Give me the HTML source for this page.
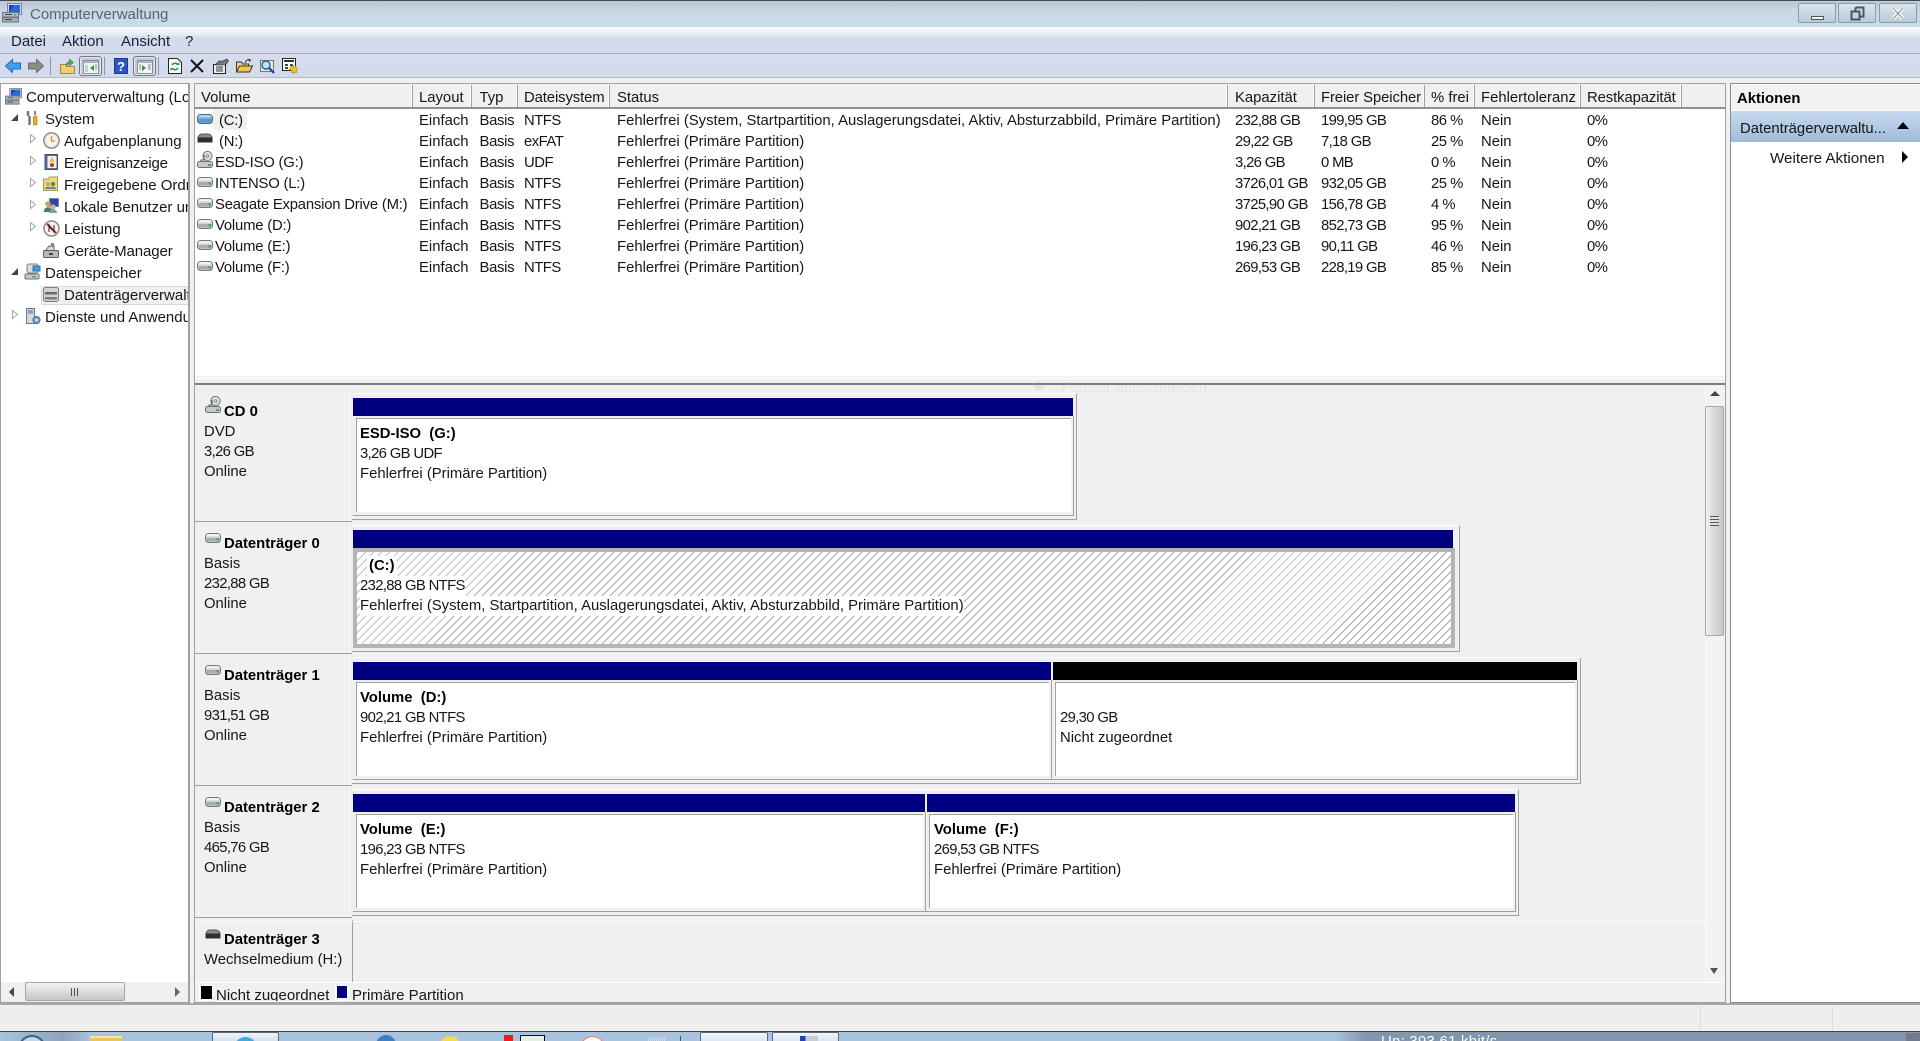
<!DOCTYPE html>
<html lang="de"><head><meta charset="utf-8"><title>Computerverwaltung</title>
<style>
html,body{margin:0;padding:0;width:1920px;height:1041px;overflow:hidden;background:#f0f0f0}
body{position:relative;font:14.85px/20px "Liberation Sans",sans-serif;color:#161616}
.a{position:absolute}
.t{position:absolute;white-space:nowrap;height:20px;line-height:20px;margin-top:1px}
.f{font-size:15px}
.n{letter-spacing:-.65px}
b{font-weight:700;color:#000}
svg{position:absolute;overflow:visible}
.hd{position:absolute;top:85px;height:23px;background:#f0f0f0;border-right:1px solid #a0a0a0;box-shadow:inset -1px 0 0 #fff;box-sizing:border-box}
.r{position:absolute;left:0;width:1700px;height:21px}
.r span{position:absolute;white-space:nowrap;line-height:21px;top:2px}
.r span:nth-child(1){left:215px;letter-spacing:-.2px}.r span:nth-child(2){left:419px}.r span:nth-child(3){left:479.500px;letter-spacing:-.3px}.r span:nth-child(4){left:524px;letter-spacing:-.5px}.r span:nth-child(5){left:617px}.r span:nth-child(6){left:1235px;letter-spacing:-.65px}.r span:nth-child(7){left:1321px;letter-spacing:-.65px}.r span:nth-child(8){left:1431px;letter-spacing:-.5px}.r span:nth-child(9){left:1481px}.r span:nth-child(10){left:1587px;letter-spacing:-.5px}
.frame{position:absolute;left:352px;background:#f0f0f0;border-top:1px solid #fff;border-right:1px solid #a0a0a0;border-bottom:1px solid #a0a0a0;box-sizing:border-box}
.bar{position:absolute;top:530px;height:18px}
.box{position:absolute;background:#f0f0f0;border-right:1px solid #a0a0a0;border-bottom:1px solid #a0a0a0;box-sizing:border-box}
.in{position:absolute;left:3px;top:2px;right:2px;bottom:3px;background:#fff;border-left:1px solid #a0a0a0;border-top:1px solid #a0a0a0}
.sep{position:absolute;left:195px;width:157px;height:1px;background:#a0a0a0}
.tr{position:absolute;width:0;height:0}
.clip{position:absolute;overflow:hidden}
</style></head><body>
<svg width="0" height="0" style="position:absolute">
<defs>
<symbol id="drv" viewBox="0 0 16 10"><rect x=".5" y=".5" width="15" height="9" rx="3" fill="#d4d6d8" stroke="#77797c"/><rect x="1.5" y="1.2" width="13" height="2" rx="1" fill="#f4f4f4"/><rect x="1.5" y="5" width="13" height="3.5" fill="#a9abae"/><rect x="11.5" y="5" width="2.5" height="2.5" fill="#3fae49"/></symbol>
<symbol id="drvb" viewBox="0 0 16 10"><rect x=".5" y=".5" width="15" height="9" rx="3" fill="#7fb0e0" stroke="#3f6f9f"/><rect x="1.5" y="1.2" width="13" height="2" rx="1" fill="#b5d5f2"/><rect x="1.5" y="5" width="13" height="3.5" fill="#5d94cc"/><rect x="11.5" y="5" width="2.5" height="2.5" fill="#3fae49"/></symbol>
<symbol id="drvk" viewBox="0 0 16 10"><path d="M1 9V5a4 4 0 0 1 4-4h6a4 4 0 0 1 4 4v4z" fill="#8a8a8a" stroke="#555"/><rect x=".5" y="4.5" width="15" height="5" rx="1" fill="#2f2f2f"/></symbol>
<symbol id="cd" viewBox="0 0 16 17"><circle cx="10.5" cy="5" r="4.6" fill="#dfe2e5" stroke="#777"/><circle cx="10.5" cy="5" r="1.3" fill="#fff" stroke="#888"/><path d="M7 4v5H4v2" fill="none" stroke="#555"/><rect x=".5" y="10.5" width="15" height="6" rx="2" fill="#c6c8cb" stroke="#6f7174"/><rect x="11" y="13" width="3" height="2" fill="#3fae49"/></symbol>
<symbol id="comp" viewBox="0 0 20 20"><rect x="5.5" y=".5" width="14" height="11" fill="#d5dbe3" stroke="#7c8694"/><rect x="7" y="2" width="11" height="8" fill="#1f3fbf"/><path d="M7 10l5-8h6v8z" fill="#2a6ad8"/><rect x=".5" y="9.5" width="16" height="4.5" fill="#b8bec6" stroke="#6d7480"/><rect x=".5" y="14.5" width="16" height="4.5" fill="#a4abb4" stroke="#6d7480"/><rect x="3" y="11" width="7" height="1" fill="#444"/><rect x="3" y="16" width="7" height="1" fill="#444"/><rect x="12" y="11" width="2" height="1.5" fill="#3fae49"/></symbol>
</defs></svg>

<!-- title bar -->
<div class="a" style="left:0;top:0;width:1920px;height:27px;background:linear-gradient(#b8c8d6,#c9d8e4 40%,#cbdbe7);border-top:1px solid #4a4a4a;box-sizing:border-box"></div>
<svg style="left:2px;top:3px" width="20" height="20"><use href="#comp" width="20" height="20"/></svg>
<div class="t f" style="left:30px;top:4px;color:#56646f">Computerverwaltung</div>
<div class="a" style="left:1798px;top:3px;width:38px;height:20px;border:1px solid #8b9aaa;border-radius:2px;box-sizing:border-box;background:linear-gradient(#d9e4ee,#b9cbda)"></div>
<div class="a" style="left:1811px;top:16px;width:13px;height:4px;background:#f4f6f8;border:1px solid #465663;box-sizing:border-box"></div>
<div class="a" style="left:1838px;top:3px;width:38px;height:20px;border:1px solid #8b9aaa;border-radius:2px;box-sizing:border-box;background:linear-gradient(#d9e4ee,#b9cbda)"></div>
<svg style="left:1850px;top:6px" width="16" height="15"><path d="M5.5 1.5h8v9h-3M5.5 1.5v3" fill="none" stroke="#465663" stroke-width="2"/><rect x="1.5" y="5.5" width="8" height="8" fill="none" stroke="#465663" stroke-width="2"/></svg>
<div class="a" style="left:1879px;top:3px;width:38px;height:20px;border:1px solid #8b9aaa;border-radius:2px;box-sizing:border-box;background:linear-gradient(#d9e4ee,#b9cbda)"></div>
<svg style="left:1891px;top:7px" width="14" height="13"><path d="M2 1l10 11M12 1L2 12" stroke="#f4f6f8" stroke-width="4"/><path d="M2 1l10 11M12 1L2 12" stroke="#5a6a78" stroke-width="1" opacity=".7"/></svg>

<!-- menu -->
<div class="a" style="left:0;top:27px;width:1920px;height:27px;background:linear-gradient(#fafcfd,#e6ebf5 8px,#d4dbed 10px,#d4dbed);border-bottom:1px solid #a6acb6;box-sizing:border-box"></div>
<div class="t f" style="left:11px;top:31px;color:#15243a">Datei</div>
<div class="t f" style="left:62px;top:31px;color:#15243a">Aktion</div>
<div class="t f" style="left:121px;top:31px;color:#15243a">Ansicht</div>
<div class="t f" style="left:185px;top:31px;color:#15243a">?</div>

<!-- toolbar -->
<div class="a" style="left:0;top:54px;width:1920px;height:24px;background:linear-gradient(#d6dcee,#d2daec);border-bottom:1px solid #b4bac6;box-sizing:border-box"></div>
<svg style="left:5px;top:59px" width="16" height="14"><path d="M7.5 .5L.5 7l7 6.500V10h8V4h-8z" fill="#3f9fef" stroke="#1f6fb5"/></svg>
<svg style="left:28px;top:59px" width="16" height="14"><path d="M8.500 .5L15.500 7l-7 6.500V10h-8V4h8z" fill="#8c8c8c" stroke="#6c6c6c"/></svg>
<div class="a" style="left:50px;top:57px;width:1px;height:18px;background:#8f96a3"></div>
<svg style="left:60px;top:58px" width="15" height="16"><path d="M.5 6.500h5l1.500 2h7.500v7H.5z" fill="#efcf6f" stroke="#a9873a"/><path d="M6 8c0-3 1-4 3.500-4.500V1l4 3.500-4 3.500V5.500C8 6 7 7 7 8.500z" fill="#4fae4f" stroke="#2e7d32" stroke-width=".5"/></svg>
<div class="a" style="left:79px;top:56px;width:23px;height:20px;border:1px solid #6f7680;border-radius:3px;box-sizing:border-box;background:#c3c9d6;box-shadow:inset 0 0 0 1px #e6e9f0"></div>
<svg style="left:83px;top:60px" width="16" height="14"><rect x=".5" y=".5" width="15" height="13" fill="#f2f4f8" stroke="#8a8f98"/><rect x="1" y="1" width="14" height="2" fill="#a8b3c6"/><path d="M2 5h3v7H2z" fill="#bcd3e6"/><path d="M11 5v6L7 8z" fill="#2e9a3e"/><path d="M12 5h2M12 7h2M12 9h2" stroke="#888"/></svg>
<div class="a" style="left:104px;top:57px;width:1px;height:18px;background:#8f96a3"></div>
<svg style="left:114px;top:58px" width="14" height="16"><rect x=".5" y=".5" width="13" height="15" fill="#2f55c5" stroke="#1d3a8f"/><text x="7" y="13" text-anchor="middle" font-family="Liberation Sans" font-size="13" font-weight="700" fill="#fff">?</text></svg>
<div class="a" style="left:133px;top:56px;width:23px;height:20px;border:1px solid #6f7680;border-radius:3px;box-sizing:border-box;background:#c3c9d6;box-shadow:inset 0 0 0 1px #e6e9f0"></div>
<svg style="left:137px;top:60px" width="16" height="14"><rect x=".5" y=".5" width="15" height="13" fill="#f2f4f8" stroke="#8a8f98"/><rect x="1" y="1" width="14" height="2" fill="#a8b3c6"/><path d="M5 5v6l4-3z" fill="#2e9a3e"/><path d="M2 5h2M2 7h2M2 9h2M11 5h3M11 7h3M11 9h3" stroke="#888"/></svg>
<div class="a" style="left:158px;top:57px;width:1px;height:18px;background:#8f96a3"></div>
<svg style="left:168px;top:58px" width="14" height="16"><path d="M.5.5h9l4 4v11H.5z" fill="#fff" stroke="#222"/><path d="M4 7a3.500 3.500 0 0 1 6 0M10 10a3.500 3.500 0 0 1-6 0" fill="none" stroke="#1f9a3a" stroke-width="1.500"/><path d="M8.500 7h3V4zM5.500 10h-3v3z" fill="#1f9a3a"/></svg>
<svg style="left:190px;top:59px" width="14" height="14"><path d="M1 1l12 12M13 1L1 13" stroke="#111" stroke-width="2"/></svg>
<svg style="left:213px;top:58px" width="16" height="16"><path d="M.5 6.500h12v9H.5z" fill="#f3f3f3" stroke="#222"/><path d="M3 9h7M3 11h7M3 13h7" stroke="#333"/><path d="M3 6l3-3h4l4-2 1.500 2-3 4H4z" fill="#777" stroke="#222" stroke-width=".6"/></svg>
<svg style="left:236px;top:58px" width="17" height="15"><path d="M.5 14V4h5l1 2h6v2" fill="#f0d888" stroke="#333"/><path d="M.5 14l3-6h13l-3 6z" fill="#f2cb4a" stroke="#333"/><path d="M9 5c1-3 3-4 5-3" fill="none" stroke="#333"/><path d="M12.500 .5l3 1.500-2.500 2z" fill="#333"/></svg>
<svg style="left:260px;top:58px" width="15" height="16"><rect x=".5" y="2.500" width="13" height="11" fill="#efe9c8" stroke="#777"/><circle cx="6" cy="7" r="4" fill="#bfe6f5" stroke="#1f5fa5" stroke-width="1.400"/><path d="M9 10l5 5" stroke="#1f3fa5" stroke-width="2.200"/></svg>
<svg style="left:282px;top:58px" width="17" height="16"><rect x=".5" y=".5" width="13" height="12" fill="#fff" stroke="#222"/><rect x="2" y="2" width="10" height="2" fill="#333"/><path d="M3 6h3v2H3zM8 6h3v2H8zM3 9h3v2H3z" fill="#444"/><path d="M11 7l1 2 2-1 0 2 2 1-1.500 1.500.5 2-2-.5-1 2-1-2-2 .5.500-2L7 11l2-1-.5-2 2 1z" fill="#f0c020" stroke="#9a7a10" stroke-width=".5"/></svg>

<!-- tree pane -->
<div class="a" style="left:0;top:83px;width:190px;height:920px;background:#fff;border:1px solid #a0a0a0;border-width:1px 2px 1px 1px;box-sizing:border-box"></div>
<div class="clip" style="left:0;top:84px;width:188px;height:898px;font-size:15px">
  <div class="a" style="left:41px;top:202px;width:150px;height:19px;background:#f0f0f0;border:1px solid #d9d9d9;border-radius:2px;box-sizing:border-box"></div>
  <svg style="left:5px;top:4px" width="17" height="17"><use href="#comp" width="17" height="17"/></svg>
  <div class="t" style="left:26px;top:3px">Computerverwaltung (Lokal)</div>
  <div class="tr" style="left:11px;top:30px;border-left:7px solid transparent;border-bottom:7px solid #444"></div>
  <svg style="left:26px;top:26px" width="13" height="16"><path d="M2 1v5M3.500 6v9" stroke="#777" stroke-width="2.500" fill="none"/><path d="M9 1v4" stroke="#888" stroke-width="2"/><rect x="7.500" y="6" width="3.500" height="9" rx="1" fill="#e8b020" stroke="#8a6a10" stroke-width=".6"/></svg>
  <div class="t" style="left:45px;top:25px;letter-spacing:-.1px">System</div>

  <svg style="left:30px;top:50px" width="6" height="9"><path d="M.5.500v8l5-4z" fill="#fff" stroke="#a4a4a4"/></svg>
  <svg style="left:43px;top:48px" width="17" height="17"><circle cx="8.500" cy="8.500" r="7.700" fill="#e9e9e9" stroke="#8a8a8a" stroke-width="1.400"/><circle cx="8.500" cy="8.500" r="5.500" fill="#f8f6e8"/><path d="M8.500 4v5h3.500" fill="none" stroke="#bf9a40" stroke-width="1.300"/></svg>
  <div class="t" style="left:64px;top:47px">Aufgabenplanung</div>

  <svg style="left:30px;top:72px" width="6" height="9"><path d="M.5.500v8l5-4z" fill="#fff" stroke="#a4a4a4"/></svg>
  <svg style="left:44px;top:70px" width="14" height="16"><rect x="1" y=".5" width="12.500" height="15" fill="#5b6d95" stroke="#3d4d70"/><rect x="3.500" y="2" width="9" height="12" fill="#eef0f6"/><path d="M8 3l3 5H5z" fill="#f2c020"/><circle cx="8" cy="11" r="2" fill="#c33"/></svg>
  <div class="t" style="left:64px;top:69px;letter-spacing:-.2px">Ereignisanzeige</div>

  <svg style="left:30px;top:94px" width="6" height="9"><path d="M.5.500v8l5-4z" fill="#fff" stroke="#a4a4a4"/></svg>
  <svg style="left:43px;top:92px" width="15" height="15"><path d="M.5 14.500V3h5l1-2h8v13.500z" fill="#ecd688" stroke="#b39a48"/><circle cx="5" cy="8" r="2" fill="#d5a03a"/><circle cx="10" cy="8" r="2" fill="#4d8a4d"/><path d="M2 13c0-3 6-3 6 0zM7 13c0-3 6-3 6 0z" fill="#5a7fa8"/></svg>
  <div class="t" style="left:64px;top:91px">Freigegebene Ordner</div>

  <svg style="left:30px;top:116px" width="6" height="9"><path d="M.5.500v8l5-4z" fill="#fff" stroke="#a4a4a4"/></svg>
  <svg style="left:43px;top:114px" width="16" height="16"><rect x="6.500" y=".5" width="9" height="8" fill="#2646b8" stroke="#7c8694"/><circle cx="5" cy="6" r="2.800" fill="#cf9f6a"/><path d="M1 13c0-5 8-5 8 0v1H1z" fill="#4f7f4f"/><circle cx="10" cy="9" r="2.600" fill="#dab080"/><path d="M6 15c0-5 8-5 8 0z" fill="#7f98b8"/></svg>
  <div class="t" style="left:64px;top:113px">Lokale Benutzer und</div>

  <svg style="left:30px;top:138px" width="6" height="9"><path d="M.5.500v8l5-4z" fill="#fff" stroke="#a4a4a4"/></svg>
  <svg style="left:43px;top:136px" width="17" height="17"><circle cx="8.500" cy="8.500" r="7.500" fill="#f4f2ea" stroke="#8a8a8a" stroke-width="1.500"/><path d="M4 4l9 9" stroke="#d22" stroke-width="2"/><path d="M6 12V5l5 7V5" fill="none" stroke="#223" stroke-width="1"/></svg>
  <div class="t" style="left:64px;top:135px">Leistung</div>

  <svg style="left:43px;top:158px" width="16" height="16"><rect x=".5" y="8.500" width="15" height="7" rx="1" fill="#b4b8bd" stroke="#5f6368"/><path d="M3 8l3-4h5v4" fill="#d8dadd" stroke="#5f6368"/><rect x="8" y="1" width="3" height="4" fill="#888"/><rect x="6" y="11" width="4" height="2" fill="#444"/></svg>
  <div class="t" style="left:64px;top:157px;letter-spacing:-.1px">Geräte-Manager</div>

  <div class="tr" style="left:11px;top:184px;border-left:7px solid transparent;border-bottom:7px solid #444"></div>
  <svg style="left:24px;top:179px" width="17" height="17"><rect x="1" y="11" width="14" height="5" rx="1" fill="#c6cbc6" stroke="#6a6f6a"/><rect x="3" y="1" width="11" height="9" rx="2" fill="#d8dee0" stroke="#7a8084"/><rect x="9" y="3" width="7" height="5" fill="#3f9fd8" stroke="#2c6f9c"/><rect x="8" y="13" width="4" height="1.500" fill="#3fae49"/></svg>
  <div class="t" style="left:45px;top:179px">Datenspeicher</div>

  <svg style="left:43px;top:203px" width="16" height="15"><rect x=".5" y=".5" width="15" height="14" rx="2" fill="#d2d4d6" stroke="#7a7e82"/><rect x="2" y="5" width="12" height="2.500" fill="#6a6a6a"/><rect x="2" y="10" width="12" height="2.500" fill="#7a7a7a"/></svg>
  <div class="t" style="left:64px;top:201px">Datenträgerverwaltung</div>

  <svg style="left:12px;top:226px" width="6" height="9"><path d="M.5.500v8l5-4z" fill="#fff" stroke="#a4a4a4"/></svg>
  <svg style="left:26px;top:224px" width="15" height="17"><rect x=".5" y=".5" width="8" height="15" fill="#d4d8dc" stroke="#6d7480"/><path d="M2 3h5M2 5h5" stroke="#3f6f9f"/><circle cx="10.500" cy="12" r="3.500" fill="#7fa5c8" stroke="#47688a"/><circle cx="10.500" cy="12" r="1" fill="#fff"/></svg>
  <div class="t" style="left:45px;top:223px">Dienste und Anwendungen</div>
</div>
<!-- tree h scrollbar -->
<div class="a" style="left:1px;top:982px;width:187px;height:20px;background:#f0f0f0"></div>
<div class="a" style="left:25px;top:982px;width:100px;height:19px;border:1px solid #a6a6a6;border-radius:2px;box-sizing:border-box;background:linear-gradient(#f2f2f2,#dcdcdc 50%,#c6c6c6)"></div>
<div class="a" style="left:71px;top:988px;width:7px;height:8px;background:repeating-linear-gradient(90deg,#555 0 1px,transparent 1px 3px)"></div>
<div class="tr" style="left:9px;top:987px;border-top:5px solid transparent;border-bottom:5px solid transparent;border-right:5px solid #444"></div>
<div class="tr" style="left:175px;top:987px;border-top:5px solid transparent;border-bottom:5px solid transparent;border-left:5px solid #666"></div>

<!-- main pane border -->
<div class="a" style="left:194px;top:83px;width:1532px;height:920px;border:1px solid #a0a0a0;border-right-width:1px;box-sizing:border-box;background:#fff"></div>

<!-- list headers -->
<div class="a" style="left:195px;top:84px;width:1530px;height:24px;background:#f0f0f0"></div>
<div class="hd" style="left:195px;width:218px"></div>
<div class="hd" style="left:413px;width:59px"></div>
<div class="hd" style="left:472px;width:46px"></div>
<div class="hd" style="left:518px;width:92px"></div>
<div class="hd" style="left:610px;width:618px"></div>
<div class="hd" style="left:1228px;width:87px"></div>
<div class="hd" style="left:1315px;width:110px"></div>
<div class="hd" style="left:1425px;width:50px"></div>
<div class="hd" style="left:1475px;width:106px"></div>
<div class="hd" style="left:1581px;width:101px"></div>
<div class="a" style="left:195px;top:107px;width:1530px;height:2px;background:#8f8f8f"></div>
<div class="t" style="left:201px;top:87px">Volume</div>
<div class="t" style="left:419px;top:87px">Layout</div>
<div class="t" style="left:479.500px;top:87px">Typ</div>
<div class="t" style="left:524px;top:87px;letter-spacing:-.1px">Dateisystem</div>
<div class="t" style="left:617px;top:87px">Status</div>
<div class="t" style="left:1235px;top:87px">Kapazität</div>
<div class="t" style="left:1321px;top:87px;letter-spacing:-.1px">Freier Speicher</div>
<div class="t" style="left:1431px;top:87px">% frei</div>
<div class="t" style="left:1481px;top:87px">Fehlertoleranz</div>
<div class="t" style="left:1587px;top:87px;letter-spacing:-.1px">Restkapazität</div>

<!-- list rows -->
<div class="a" style="left:213px;top:109px;width:34px;height:21px;background:#f0f0f0"></div>
<div class="r" style="top:109px"><span style="left:219px">(C:)</span><span>Einfach</span><span>Basis</span><span>NTFS</span><span>Fehlerfrei (System, Startpartition, Auslagerungsdatei, Aktiv, Absturzabbild, Primäre Partition)</span><span>232,88 GB</span><span>199,95 GB</span><span>86 %</span><span>Nein</span><span>0%</span></div>
<div class="r" style="top:130px"><span style="left:219px">(N:)</span><span>Einfach</span><span>Basis</span><span>exFAT</span><span>Fehlerfrei (Primäre Partition)</span><span>29,22 GB</span><span>7,18 GB</span><span>25 %</span><span>Nein</span><span>0%</span></div>
<div class="r" style="top:151px"><span>ESD-ISO (G:)</span><span>Einfach</span><span>Basis</span><span>UDF</span><span>Fehlerfrei (Primäre Partition)</span><span>3,26 GB</span><span>0 MB</span><span>0 %</span><span>Nein</span><span>0%</span></div>
<div class="r" style="top:172px"><span>INTENSO (L:)</span><span>Einfach</span><span>Basis</span><span>NTFS</span><span>Fehlerfrei (Primäre Partition)</span><span>3726,01 GB</span><span>932,05 GB</span><span>25 %</span><span>Nein</span><span>0%</span></div>
<div class="r" style="top:193px"><span>Seagate Expansion Drive (M:)</span><span>Einfach</span><span>Basis</span><span>NTFS</span><span>Fehlerfrei (Primäre Partition)</span><span>3725,90 GB</span><span>156,78 GB</span><span>4 %</span><span>Nein</span><span>0%</span></div>
<div class="r" style="top:214px"><span>Volume (D:)</span><span>Einfach</span><span>Basis</span><span>NTFS</span><span>Fehlerfrei (Primäre Partition)</span><span>902,21 GB</span><span>852,73 GB</span><span>95 %</span><span>Nein</span><span>0%</span></div>
<div class="r" style="top:235px"><span>Volume (E:)</span><span>Einfach</span><span>Basis</span><span>NTFS</span><span>Fehlerfrei (Primäre Partition)</span><span>196,23 GB</span><span>90,11 GB</span><span>46 %</span><span>Nein</span><span>0%</span></div>
<div class="r" style="top:256px"><span>Volume (F:)</span><span>Einfach</span><span>Basis</span><span>NTFS</span><span>Fehlerfrei (Primäre Partition)</span><span>269,53 GB</span><span>228,19 GB</span><span>85 %</span><span>Nein</span><span>0%</span></div>
<svg style="left:197px;top:114px" width="16" height="10"><use href="#drvb" width="16" height="10"/></svg>
<svg style="left:197px;top:133px" width="16" height="10"><use href="#drvk" width="16" height="10"/></svg>
<svg style="left:197px;top:151px" width="16" height="17"><use href="#cd" width="16" height="17"/></svg>
<svg style="left:197px;top:177px" width="16" height="10"><use href="#drv" width="16" height="10"/></svg>
<svg style="left:197px;top:198px" width="16" height="10"><use href="#drv" width="16" height="10"/></svg>
<svg style="left:197px;top:219px" width="16" height="10"><use href="#drv" width="16" height="10"/></svg>
<svg style="left:197px;top:240px" width="16" height="10"><use href="#drv" width="16" height="10"/></svg>
<svg style="left:197px;top:261px" width="16" height="10"><use href="#drv" width="16" height="10"/></svg>

<!-- splitter + disk area -->
<div class="a" style="left:195px;top:376px;width:1530px;height:7px;background:linear-gradient(#f2f2f2,#f2f2f2 2px,#fff 2px,#fff 3px,#f0f0f0 3px)"></div>
<div class="a" style="left:195px;top:385px;width:1530px;height:617px;background:#f0f0f0"></div>
<div class="t" style="left:1061px;top:377px;color:#e4e4e4">Fenster ausschneiden</div>
<div class="a" style="left:1034px;top:381px;width:10px;height:10px;border-radius:50%;background:#e4e4e4"></div>
<div class="a" style="left:195px;top:383px;width:1530px;height:2px;background:#7f7f7f"></div>

<!-- label column separators -->
<div class="a" style="left:349px;top:391px;width:1px;height:526px;background:#fafafa"></div>
<div class="sep" style="top:521px"></div>
<div class="sep" style="top:653px"></div>
<div class="sep" style="top:785px"></div>
<div class="sep" style="top:917px"></div>
<div class="a" style="left:352px;top:920px;width:1px;height:62px;background:#a0a0a0"></div>
<div class="a" style="left:195px;top:921px;width:1510px;height:1px;background:#fafafa"></div>

<!-- labels -->
<svg style="left:205px;top:396px" width="16" height="17"><use href="#cd" width="16" height="17"/></svg>
<div class="t" style="left:224px;top:401px"><b>CD 0</b></div>
<div class="t" style="left:204px;top:421px">DVD</div>
<div class="t n" style="left:204px;top:441px">3,26 GB</div>
<div class="t" style="left:204px;top:461px">Online</div>

<svg style="left:205px;top:533px" width="16" height="10"><use href="#drv" width="16" height="10"/></svg>
<div class="t" style="left:224px;top:533px"><b>Datenträger 0</b></div>
<div class="t" style="left:204px;top:553px">Basis</div>
<div class="t n" style="left:204px;top:573px">232,88 GB</div>
<div class="t" style="left:204px;top:593px">Online</div>

<svg style="left:205px;top:665px" width="16" height="10"><use href="#drv" width="16" height="10"/></svg>
<div class="t" style="left:224px;top:665px"><b>Datenträger 1</b></div>
<div class="t" style="left:204px;top:685px">Basis</div>
<div class="t n" style="left:204px;top:705px">931,51 GB</div>
<div class="t" style="left:204px;top:725px">Online</div>

<svg style="left:205px;top:797px" width="16" height="10"><use href="#drv" width="16" height="10"/></svg>
<div class="t" style="left:224px;top:797px"><b>Datenträger 2</b></div>
<div class="t" style="left:204px;top:817px">Basis</div>
<div class="t n" style="left:204px;top:837px">465,76 GB</div>
<div class="t" style="left:204px;top:857px">Online</div>

<svg style="left:205px;top:929px" width="16" height="10"><use href="#drvk" width="16" height="10"/></svg>
<div class="t" style="left:224px;top:929px"><b>Datenträger 3</b></div>
<div class="t" style="left:204px;top:949px">Wechselmedium (H:)</div>

<!-- CD 0 -->
<div class="frame" style="top:393px;width:725px;height:127px"></div>
<div class="bar" style="top:398px;left:353px;width:720px;background:#000080"></div>
<div class="box" style="top:416px;left:353px;width:721px;height:100px"><div class="in"></div></div>
<div class="t" style="left:360px;top:423px"><b>ESD-ISO&nbsp; (G:)</b></div>
<div class="t n" style="left:360px;top:443px">3,26 GB UDF</div>
<div class="t" style="left:360px;top:463px">Fehlerfrei (Primäre Partition)</div>

<!-- Disk 0 -->
<div class="frame" style="top:525px;width:1108px;height:127px"></div>
<div class="bar" style="top:530px;left:353px;width:1100px;background:#000080"></div>
<div class="a" style="left:353px;top:548px;width:1102px;height:100px;background:#b4b4b4"></div>
<div class="a" style="left:357px;top:552px;width:1094px;height:92px;background:#fff repeating-linear-gradient(135deg,#a8a8a8 0,#a8a8a8 1px,#fff 1px,#fff 5.66px)"></div>
<div class="t" style="left:367px;top:555px;background:#fff;padding:0 2px"><b>(C:)</b></div>
<div class="t n" style="left:360px;top:575px;background:#fff">232,88 GB NTFS</div>
<div class="t" style="left:360px;top:595px;background:#fff">Fehlerfrei (System, Startpartition, Auslagerungsdatei, Aktiv, Absturzabbild, Primäre Partition)</div>

<!-- Disk 1 -->
<div class="frame" style="top:657px;width:1229px;height:127px"></div>
<div class="bar" style="top:662px;left:353px;width:698px;background:#000080"></div>
<div class="bar" style="top:662px;left:1053px;width:524px;background:#000"></div>
<div class="box" style="top:680px;left:353px;width:699px;height:100px"><div class="in"></div></div>
<div class="box" style="top:680px;left:1052px;width:526px;height:100px"><div class="in"></div></div>
<div class="t" style="left:360px;top:687px"><b>Volume&nbsp; (D:)</b></div>
<div class="t n" style="left:360px;top:707px">902,21 GB NTFS</div>
<div class="t" style="left:360px;top:727px">Fehlerfrei (Primäre Partition)</div>
<div class="t n" style="left:1060px;top:707px">29,30 GB</div>
<div class="t" style="left:1060px;top:727px">Nicht zugeordnet</div>

<!-- Disk 2 -->
<div class="frame" style="top:789px;width:1167px;height:127px"></div>
<div class="bar" style="top:794px;left:353px;width:572px;background:#000080"></div>
<div class="bar" style="top:794px;left:927px;width:588px;background:#000080"></div>
<div class="box" style="top:812px;left:353px;width:573px;height:100px"><div class="in"></div></div>
<div class="box" style="top:812px;left:926px;width:590px;height:100px"><div class="in"></div></div>
<div class="t" style="left:360px;top:819px"><b>Volume&nbsp; (E:)</b></div>
<div class="t n" style="left:360px;top:839px">196,23 GB NTFS</div>
<div class="t" style="left:360px;top:859px">Fehlerfrei (Primäre Partition)</div>
<div class="t" style="left:934px;top:819px"><b>Volume&nbsp; (F:)</b></div>
<div class="t n" style="left:934px;top:839px">269,53 GB NTFS</div>
<div class="t" style="left:934px;top:859px">Fehlerfrei (Primäre Partition)</div>

<!-- scrollbar -->
<div class="a" style="left:1705px;top:385px;width:19px;height:597px;background:#f2f2f2;border-left:1px solid #f8f8f8;box-sizing:border-box"></div>
<div class="tr" style="left:1710px;top:391px;border-left:5px solid transparent;border-right:5px solid transparent;border-bottom:5px solid #444"></div>
<div class="a" style="left:1705px;top:406px;width:19px;height:230px;border:1px solid #a6a6a6;border-radius:2px;box-sizing:border-box;background:linear-gradient(90deg,#f2f2f2,#dadade 45%,#c8c8cc)"></div>
<div class="a" style="left:1710px;top:516px;width:9px;height:10px;background:repeating-linear-gradient(#555 0 1px,#e2e2e2 1px 3px)"></div>
<div class="tr" style="left:1710px;top:968px;border-left:4px solid transparent;border-right:4px solid transparent;border-top:6px solid #555"></div>

<!-- legend -->
<div class="a" style="left:195px;top:982px;width:1530px;height:1px;background:#fff"></div>
<div class="a" style="left:195px;top:1002px;width:1530px;height:1px;background:#a0a0a0"></div>
<div class="a" style="left:199px;top:985px;width:14px;height:16px;background:#fff"></div>
<div class="a" style="left:201px;top:986px;width:11px;height:13px;background:#000"></div>
<div class="clip" style="left:216px;top:985px;width:115px;height:16px;background:#f0f0f0"><div class="t f" style="left:0;top:0">Nicht zugeordnet</div></div>
<div class="a" style="left:216px;top:1001px;width:118px;height:1px;background:#fff"></div>
<div class="a" style="left:335px;top:985px;width:14px;height:16px;background:#fff"></div>
<div class="a" style="left:337px;top:986px;width:10px;height:12px;background:#000080"></div>
<div class="clip" style="left:352px;top:985px;width:112px;height:17px"><div class="t f" style="left:0;top:0">Primäre Partition</div></div>

<!-- actions pane -->
<div class="a" style="left:1730px;top:83px;width:190px;height:920px;background:#fff;border:solid #8a8a8a;border-width:1px 0 1px 1px;box-sizing:border-box"></div>
<div class="a" style="left:1731px;top:85px;width:189px;height:25px;background:#f2f2f2"></div>
<div class="t" style="left:1737px;top:88px"><b>Aktionen</b></div>
<div class="a" style="left:1731px;top:111px;width:189px;height:31px;background:linear-gradient(#c5daee,#a2bbd8)"></div>
<div class="t" style="left:1740px;top:118px">Datenträgerverwaltu...</div>
<div class="tr" style="left:1897px;top:122px;border-left:6px solid transparent;border-right:6px solid transparent;border-bottom:7px solid #000"></div>
<div class="t" style="left:1770px;top:148px;font-size:15.200px">Weitere Aktionen</div>
<div class="tr" style="left:1902px;top:151px;border-top:6px solid transparent;border-bottom:6px solid transparent;border-left:6px solid #000"></div>

<!-- status bar -->
<div class="a" style="left:0;top:1003px;width:1920px;height:2px;background:#a8a8a8"></div>
<div class="a" style="left:0;top:1005px;width:1920px;height:26px;background:#f0eded"></div>
<div class="a" style="left:1700px;top:1006px;width:1px;height:24px;background:#dcdcdc"></div>
<div class="a" style="left:1832px;top:1006px;width:1px;height:24px;background:#dcdcdc"></div>

<!-- taskbar -->
<div class="clip" style="left:0;top:1031px;width:1920px;height:10px;background:linear-gradient(90deg,#a9c2de 0,#a9c2de 1335px,#8496ae 1365px,#8496ae 100%)">
  <div class="a" style="left:0;top:0;width:1920px;height:1px;background:#3c4652"></div>
  <div class="a" style="left:0;top:1px;width:90px;height:9px;background:linear-gradient(90deg,#a9c2de,#8fa4bd 70%,#a9c2de)"></div>
  <div class="a" style="left:18px;top:4px;width:28px;height:28px;border:2px solid #3a5f8a;border-radius:50%;background:#c5d6e6;box-sizing:border-box"></div>
  <div class="a" style="left:90px;top:5px;width:32px;height:12px;background:#e8c65a;border-top:2px solid #f5e6a8;box-sizing:border-box"></div>
  <div class="a" style="left:212px;top:1px;width:67px;height:12px;background:linear-gradient(#eef4fa,#cfdceb);border:1px solid #5a6a7a;border-radius:2px;box-sizing:border-box"></div>
  <div class="a" style="left:234px;top:6px;width:23px;height:23px;border-radius:50%;background:#3fa9e0"></div>
  <div class="a" style="left:376px;top:4px;width:20px;height:20px;border-radius:50%;background:#3f7fc0"></div>
  <div class="a" style="left:441px;top:5px;width:18px;height:14px;border-radius:50% 50% 0 0;background:#f2dc50"></div>
  <div class="a" style="left:504px;top:4px;width:9px;height:8px;background:#f01818"></div>
  <div class="a" style="left:520px;top:4px;width:25px;height:12px;background:#e6efe6;border:1px solid #111;box-sizing:border-box"></div>
  <div class="a" style="left:580px;top:5px;width:25px;height:25px;border-radius:50%;background:#fff;border:1px solid #e08080;box-sizing:border-box"></div>
  <div class="a" style="left:648px;top:6px;width:18px;height:6px;background:repeating-linear-gradient(90deg,#cfd8e2 0 1px,#a9c2de 1px 2px)"></div>
  <div class="a" style="left:680px;top:5px;width:1px;height:6px;background:#555"></div>
  <div class="a" style="left:700px;top:1px;width:68px;height:12px;background:linear-gradient(#eef4fa,#d7e2ee);border:1px solid #5a6a7a;border-radius:2px;box-sizing:border-box"></div>
  <div class="a" style="left:772px;top:1px;width:67px;height:12px;background:linear-gradient(#eef4fa,#d7e2ee);border:1px solid #5a6a7a;border-radius:2px;box-sizing:border-box"></div>
  <div class="a" style="left:800px;top:5px;width:18px;height:6px;background:linear-gradient(90deg,#2040c0 30%,#c8ccd2 30%)"></div>
  <div class="t" style="left:1381px;top:0;color:#fff;letter-spacing:.3px">Up: 393,61 kbit/s</div>
  <div class="a" style="left:1906px;top:2px;width:14px;height:8px;background:#707c8a"></div>
</div>
</body></html>
